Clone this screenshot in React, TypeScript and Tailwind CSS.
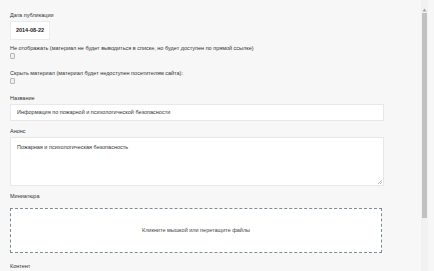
import React from 'react'

function Label({ children, className = '' }: { children: React.ReactNode; className?: string }) {
  return <div className={`h-[8px] leading-[8px] text-[5.5px] text-[#333] ${className}`}>{children}</div>
}

function Checkbox({ className = '' }: { className?: string }) {
  return <div className={`w-[5px] h-[6px] border border-[#b8b8b8] bg-[#f0f0f0] rounded-[1px] ${className}`} />
}

export default function App() {
  return (
    <div
      className="h-[271px] w-[434px] overflow-hidden bg-[#f7f7f7] flex"
      style={{ fontFamily: '"Liberation Sans", Arial, sans-serif' }}
    >
      {/* form */}
      <div className="w-[421px] pl-[10px] pr-[37px] pt-[11px]">
        <Label>Дата публикации</Label>
        <div className="mt-[2px] w-[40px] h-[19px] bg-white border border-[#ececec] flex items-center justify-center text-[5.5px] font-semibold text-[#222]">
          2014-08-22
        </div>

        <Label className="mt-[4px]">
          Не отображать (материал не будет выводиться в списке, но будет доступен по прямой ссылке)
        </Label>
        <Checkbox className="mt-[1px]" />

        <Label className="mt-[10px]">Скрыть материал (материал будет недоступен посетителям сайта):</Label>
        <Checkbox className="mt-[1px]" />

        <Label className="mt-[10px]">Название</Label>
        <div className="mt-[2px] h-[17px] bg-white border border-[#e8e8e8] flex items-center px-[6px] text-[5.5px] text-[#333]">
          Информация по пожарной и психологической безопасности
        </div>

        <Label className="mt-[6px]">Анонс</Label>
        <div className="relative mt-[2px] h-[49px] bg-white border border-[#e8e8e8] px-[6px] pt-[5px] text-[5.5px] leading-[8px] text-[#333]">
          Пожарная и психологическая безопасность
          <svg className="absolute right-[1px] bottom-[1px]" width="5" height="5" viewBox="0 0 5 5">
            <path d="M1 5L5 1M3 5L5 3" stroke="#a0a0a0" strokeWidth="0.7" />
          </svg>
        </div>

        <Label className="mt-[6px]">Миниатюра</Label>
        <div className="mt-[8px] mr-[2px] h-[45px] bg-white border border-dashed border-[#7d8d95] flex items-center justify-center text-[5.5px] text-[#444]">
          Кликните мышкой или перетащите файлы
        </div>

        <Label className="mt-[9px]">Контент</Label>
      </div>

      {/* scrollbar */}
      <div className="w-[7px] h-full bg-[#f1f1f1] flex flex-col items-center pt-[8px]">
        <svg width="5" height="4" viewBox="0 0 5 4">
          <path d="M2.5 0.5L4.5 3.5H0.5Z" fill="#a3a3a3" />
        </svg>
        <div className="mt-[1px] w-[5px] h-[205px] bg-[#c1c1c1]" />
      </div>
    </div>
  )
}
